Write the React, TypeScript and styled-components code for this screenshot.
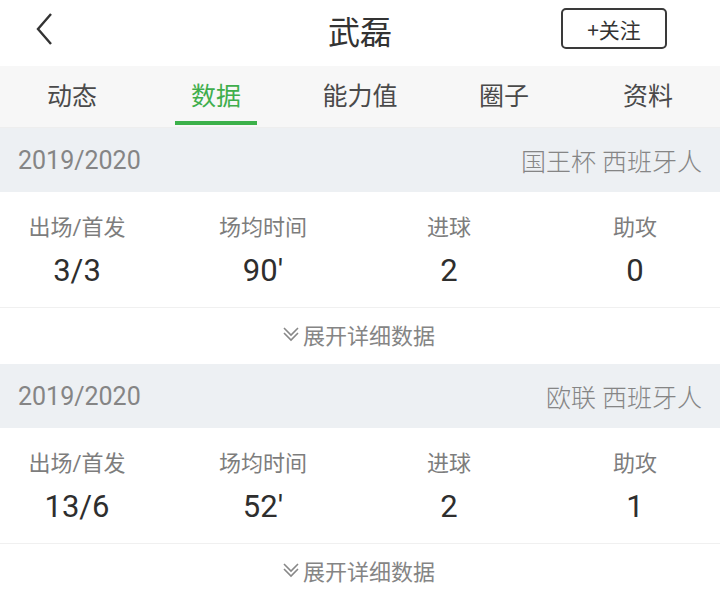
import React from 'react'
import styled, { createGlobalStyle } from 'styled-components'

const Global = createGlobalStyle`
  body {
    margin: 0;
    background: #ffffff;
    font-family: Roboto, "Noto Sans CJK SC", sans-serif;
  }
`

const Page = styled.div`
  width: 720px;
  height: 601px;
  overflow: hidden;
  background: #ffffff;
`

const TopBar = styled.header`
  height: 66px;
  display: grid;
  grid-template-columns: 1fr auto 1fr;
  align-items: center;
`

const Back = styled.button`
  border: none;
  background: transparent;
  padding: 0;
  width: 24px;
  height: 36px;
  justify-self: start;
  margin: -8px 0 0 34px;
  svg { display: block; }
`

const Title = styled.h1`
  margin: -6px 0 0;
  text-align: center;
  font-family: "Noto Sans CJK SC", sans-serif;
  font-size: 32px;
  font-weight: 400;
  color: #333333;
`

const Follow = styled.button`
  justify-self: end;
  width: 106px;
  height: 41px;
  margin: -9px 53px 0 0;
  border: 2px solid #3a3a3a;
  border-radius: 5px;
  background: #ffffff;
  color: #333333;
  font-family: "Noto Sans CJK SC", sans-serif;
  font-size: 21px;
  padding: 0;
`

const Tabs = styled.nav`
  height: 62px;
  display: grid;
  grid-template-columns: repeat(5, 1fr);
  background: #f7f7f7;
  box-shadow: inset 0 -1px 0 #eeeeee;
`

const Tab = styled.div<{ $active?: boolean }>`
  position: relative;
  display: flex;
  align-items: center;
  justify-content: center;
  padding-bottom: 6px;
  font-size: 25px;
  color: ${p => (p.$active ? '#3fae4c' : '#4a4a4a')};
  &::after {
    content: '';
    display: ${p => (p.$active ? 'block' : 'none')};
    position: absolute;
    left: 31px;
    right: 31px;
    bottom: 3px;
    height: 4px;
    background: #3cb14a;
  }
`

const SeasonBar = styled.div`
  height: 64px;
  display: flex;
  align-items: center;
  justify-content: space-between;
  padding: 0 18px;
  background: #edf0f3;
  color: #858585;
  font-size: 25px;
  font-weight: 300;
`

const Year = styled.span`
  font-family: Roboto, sans-serif;
  font-size: 25px;
  font-weight: 400;
`

const Stats = styled.div`
  height: 116px;
  display: grid;
  grid-template-columns: repeat(4, 186px);
  margin-left: -16px;
  align-content: center;
  border-bottom: 1px solid #f0f0f0;
  box-sizing: border-box;
`

const Stat = styled.div`
  display: flex;
  flex-direction: column;
  align-items: center;
  gap: 8px;
  padding-top: 4px;
`

const Label = styled.span`
  font-size: 22px;
  color: #7d7d7d;
  line-height: 30px;
`

const Value = styled.span`
  font-size: 31px;
  color: #2e2e2e;
  line-height: 40px;
  font-family: Roboto, sans-serif;
`

const Expand = styled.div`
  height: 56px;
  display: flex;
  align-items: center;
  justify-content: center;
  gap: 2px;
  padding: 0 4px 4px 0;
  box-sizing: border-box;
  color: #858585;
  font-size: 22px;
  svg { display: block; }
`

type Season = {
  year: string
  comp: string
  stats: [string, string][]
}

const seasons: Season[] = [
  {
    year: '2019/2020',
    comp: '国王杯 西班牙人',
    stats: [['出场/首发', '3/3'], ['场均时间', "90'"], ['进球', '2'], ['助攻', '0']],
  },
  {
    year: '2019/2020',
    comp: '欧联 西班牙人',
    stats: [['出场/首发', '13/6'], ['场均时间', "52'"], ['进球', '2'], ['助攻', '1']],
  },
]

const tabs = ['动态', '数据', '能力值', '圈子', '资料']

function App() {
  return (
    <Page>
      <Global />
      <TopBar>
        <Back type="button">
          <svg width="24" height="36" viewBox="0 0 24 36">
            <polyline points="17,3 4,18 17,33" fill="none" stroke="#333" strokeWidth="2.4" strokeLinejoin="miter" />
          </svg>
        </Back>
        <Title>武磊</Title>
        <Follow type="button">+关注</Follow>
      </TopBar>
      <Tabs>
        {tabs.map(t => (
          <Tab key={t} $active={t === '数据'}>{t}</Tab>
        ))}
      </Tabs>
      {seasons.map((s, i) => (
        <section key={i}>
          <SeasonBar>
            <Year>{s.year}</Year>
            <span>{s.comp}</span>
          </SeasonBar>
          <Stats>
            {s.stats.map(([l, v]) => (
              <Stat key={l}>
                <Label>{l}</Label>
                <Value>{v}</Value>
              </Stat>
            ))}
          </Stats>
          <Expand>
            <svg width="20" height="18" viewBox="0 0 20 18">
              <polyline points="3,3 10,10 17,3" fill="none" stroke="#888" strokeWidth="1.6" />
              <polyline points="3,8 10,15 17,8" fill="none" stroke="#888" strokeWidth="1.6" />
            </svg>
            <span>展开详细数据</span>
          </Expand>
        </section>
      ))}
    </Page>
  )
}

export default App
